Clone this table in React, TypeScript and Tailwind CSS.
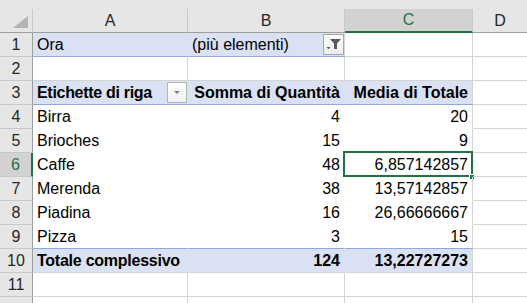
import React from 'react';

type CellProps = {
  children?: React.ReactNode;
  className?: string;
};

// plain worksheet cell, gridlines on right and bottom
const Cell: React.FC<CellProps> = ({ children, className = '' }) => (
  <div className={`relative flex items-center h-[24px] border-r border-b border-[#d4d4d4] px-[4px] whitespace-nowrap overflow-visible ${className}`}>
    {children}
  </div>
);

const RowHead: React.FC<{ n?: number; active?: boolean }> = ({ n, active }) => (
  <div
    className={`flex items-center justify-center h-[24px] border-b border-b-[#c8c8c8] ${
      active
        ? 'bg-[#d2d2d2] text-[#217346] border-r-2 border-r-[#217346]'
        : 'bg-[#e6e6e6] text-[#262626] border-r border-r-[#9e9e9e]'
    }`}
  >
    {n}
  </div>
);

const ColHead: React.FC<{ label?: string; active?: boolean; last?: boolean }> = ({ label, active, last }) => (
  <div
    className={`flex items-center justify-center h-[24px] ${last ? '' : 'border-r border-r-[#c8c8c8]'} ${
      active
        ? 'bg-[#d2d2d2] text-[#217346] border-b-2 border-b-[#217346]'
        : 'bg-[#e6e6e6] text-[#262626] border-b border-b-[#9e9e9e]'
    }`}
  >
    {label}
  </div>
);

const FilterButton = () => (
  <div className="absolute right-0 top-[1px] w-[21px] h-[21px] border border-[#a6a6a6] bg-gradient-to-b from-[#fdfdfd] to-[#ececec] flex items-center justify-center">
    <svg width="16" height="13" viewBox="0 0 16 13">
      <path d="M4 1h11l-4 4.5v5.5h-3V5.5z" fill="#595959" />
      <path d="M0.5 9h4l-2 2.2z" fill="#595959" />
    </svg>
  </div>
);

const DropButton = () => (
  <div className="absolute right-0 top-[1px] w-[20px] h-[21px] border border-[#b4b4b4] bg-gradient-to-b from-[#ffffff] to-[#f0f0f0] flex items-center justify-center">
    <svg width="8" height="5" viewBox="0 0 8 5">
      <path d="M1 1h6l-3 3z" fill="#808080" />
    </svg>
  </div>
);

const items: [string, number, string][] = [
  ['Birra', 4, '20'],
  ['Brioches', 15, '9'],
  ['Caffe', 48, '6,857142857'],
  ['Merenda', 38, '13,57142857'],
  ['Piadina', 16, '26,66666667'],
  ['Pizza', 3, '15'],
];

const blue = 'bg-[#d9e1f2]';

export default function App() {
  return (
    <div className="w-[527px] h-[303px] overflow-hidden bg-white font-['Liberation_Sans',Arial,sans-serif] text-[16px] text-black leading-[20px]">
      <div className="h-[9px] bg-[#e6e6e6]" />
      <div className="grid grid-cols-[33px_155px_157px_128px_1fr]">
        {/* corner + column letters */}
        <div className="relative h-[24px] bg-[#e6e6e6] border-r border-b border-r-[#c8c8c8] border-b-[#9e9e9e]">
          <svg className="absolute right-[4px] bottom-[4px]" width="15" height="12" viewBox="0 0 15 12">
            <path d="M15 0V12H0z" fill="#b4b4b4" />
          </svg>
        </div>
        <ColHead label="A" />
        <ColHead label="B" />
        <ColHead label="C" active />
        <ColHead label="D" last />

        {/* 1: report filter */}
        <RowHead n={1} />
        <Cell className={`${blue} border-r-transparent border-b-[#8ea9db]`}>Ora</Cell>
        <Cell className={`${blue} border-b-[#8ea9db]`}>
          (più elementi)
          <FilterButton />
        </Cell>
        <Cell />
        <Cell className="border-r-0" />

        {/* 2 */}
        <RowHead n={2} />
        <Cell />
        <Cell />
        <Cell />
        <Cell className="border-r-0" />

        {/* 3: pivot header */}
        <RowHead n={3} />
        <Cell className={`${blue} font-bold tracking-[-0.3px] border-r-transparent border-b-[#8ea9db]`}>
          Etichette di riga
          <DropButton />
        </Cell>
        <Cell className={`${blue} font-bold border-r-transparent border-b-[#8ea9db] justify-end`}>Somma di Quantità</Cell>
        <Cell className={`${blue} font-bold border-b-[#8ea9db] justify-end`}>Media di Totale</Cell>
        <Cell className="border-r-0" />

        {/* 4-9: pivot rows */}
        {items.map(([name, qty, avg], i) => {
          const last = i === items.length - 1;
          const sel = i === 2;
          const bottom = last ? 'border-b-[#8ea9db]' : 'border-b-transparent';
          return (
            <React.Fragment key={name}>
              <RowHead n={i + 4} active={sel} />
              <Cell className={`border-r-transparent ${bottom}`}>{name}</Cell>
              <Cell className={`border-r-transparent ${bottom} justify-end`}>{qty}</Cell>
              <Cell className={`${bottom} justify-end`}>
                {avg}
                {sel && (
                  <>
                    <div className="absolute left-[-2px] top-[-2px] right-[-1px] bottom-[-1px] border-2 border-[#217346] pointer-events-none" />
                    <div className="absolute right-[-3px] bottom-[-4px] w-[6px] h-[6px] bg-[#217346] border border-white" />
                  </>
                )}
              </Cell>
              <Cell className="border-r-0" />
            </React.Fragment>
          );
        })}

        {/* 10: grand total */}
        <RowHead n={10} />
        <Cell className={`${blue} font-bold tracking-[-0.25px] border-r-transparent`}>Totale complessivo</Cell>
        <Cell className={`${blue} font-bold border-r-transparent justify-end`}>124</Cell>
        <Cell className={`${blue} font-bold justify-end`}>13,22727273</Cell>
        <Cell className="border-r-0" />

        {/* 11, and the top of 12 under the window edge */}
        <RowHead n={11} />
        <Cell />
        <Cell />
        <Cell />
        <Cell className="border-r-0" />
        <RowHead />
        <Cell />
        <Cell />
        <Cell />
        <Cell className="border-r-0" />
      </div>
    </div>
  );
}
